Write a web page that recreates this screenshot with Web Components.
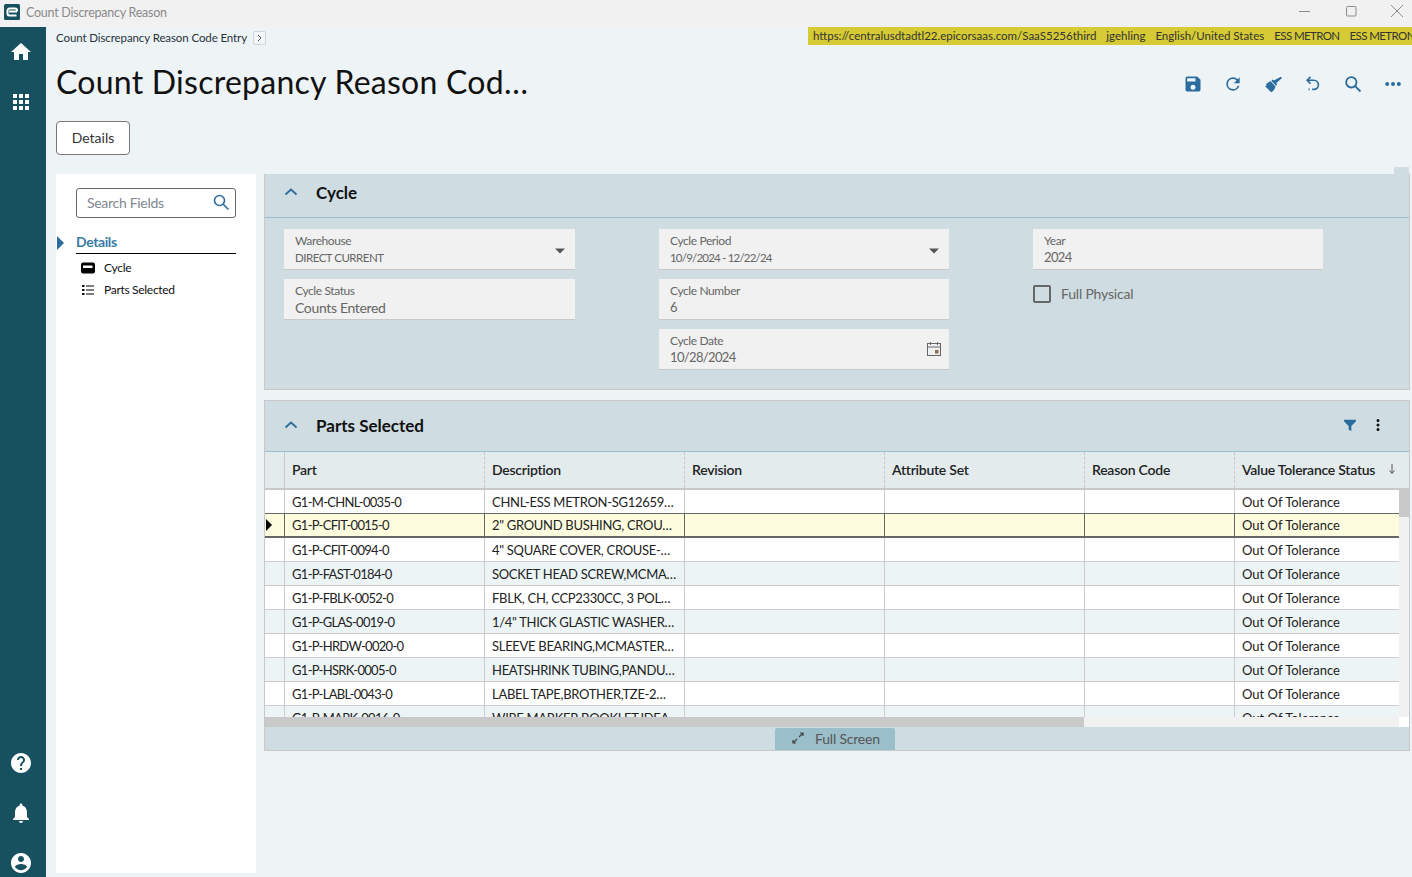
<!DOCTYPE html>
<html lang="en">
<head>
<meta charset="utf-8">
<title>Count Discrepancy Reason</title>
<style>
  html, body { margin: 0; height: 100%; overflow: hidden; }
  body {
    font-family: Lato, "Noto Sans", sans-serif;
    background: #eef3f6;
    color: #222;
    display: flex;
    flex-direction: column;
  }
  .main { display: flex; flex: 1; min-height: 0; }
  .page { flex: 1; min-width: 0; display: flex; flex-direction: column; }
</style>
</head>
<body>
<app-titlebar>Count Discrepancy Reason</app-titlebar>
<div class="main">
  <app-rail></app-rail>
  <div class="page">
    <page-header></page-header>
    <page-body>
      <side-nav slot="side"></side-nav>
      <collapse-section heading="Cycle">
        <cycle-form></cycle-form>
      </collapse-section>
      <collapse-section heading="Parts Selected" tools gap>
        <parts-grid></parts-grid>
      </collapse-section>
    </page-body>
  </div>
</div>

<script>
const icons = {
  home: 'M10 20v-6h4v6h5v-8h3L12 3 2 12h3v8z',
  apps: 'M4 8h4V4H4v4zm6 12h4v-4h-4v4zm-6 0h4v-4H4v4zm0-6h4v-4H4v4zm6 0h4v-4h-4v4zm6-10v4h4V4h-4zm-6 4h4V4h-4v4zm6 6h4v-4h-4v4zm0 6h4v-4h-4v4z',
  help: 'M12 2C6.48 2 2 6.48 2 12s4.48 10 10 10 10-4.48 10-10S17.52 2 12 2zm1 17h-2v-2h2v2zm2.07-7.75l-.9.92C13.45 12.9 13 13.5 13 15h-2v-.5c0-1.1.45-2.1 1.17-2.83l1.24-1.26c.37-.36.59-.86.59-1.41 0-1.1-.9-2-2-2s-2 .9-2 2H8c0-2.21 1.79-4 4-4s4 1.79 4 4c0 .88-.36 1.68-.93 2.25z',
  bell: 'M12 22c1.1 0 2-.9 2-2h-4c0 1.1.89 2 2 2zm6-6v-5c0-3.07-1.64-5.64-4.5-6.32V4c0-.83-.67-1.5-1.5-1.5s-1.5.67-1.5 1.5v.68C7.63 5.36 6 7.92 6 11v5l-2 2v1h16v-1l-2-2z',
  user: 'M12 2C6.48 2 2 6.48 2 12s4.48 10 10 10 10-4.48 10-10S17.52 2 12 2zm0 3c1.66 0 3 1.34 3 3s-1.34 3-3 3-3-1.34-3-3 1.34-3 3-3zm0 14.2c-2.5 0-4.71-1.28-6-3.22.03-1.99 4-3.08 6-3.08 1.99 0 5.97 1.09 6 3.08-1.29 1.94-3.5 3.22-6 3.22z',
  save: 'M17 3H5a2 2 0 0 0-2 2v14a2 2 0 0 0 2 2h14a2 2 0 0 0 2-2V7l-4-4zm-5 16a3 3 0 1 1 0-6 3 3 0 0 1 0 6zm3-10H5V5h10v4z',
  refresh: 'M17.65 6.35A7.96 7.96 0 0 0 12 4a8 8 0 1 0 7.73 10h-2.08A6 6 0 1 1 12 6c1.66 0 3.14.69 4.22 1.78L13 11h7V4l-2.35 2.35z',
  brush: 'M21.5 3.2l1.3 1.5-7 6.3 1.2 1.6-1.6 1.4-5.4-6 1.6-1.4 1.4 1.2 8.5-4.6zM8.9 8.5l6 6.6c-.4 2.6-2.3 5.4-5 6.9L2.2 14.4l2.3-.3-1-1.9 5.4-3.7z',
  more: 'M5 9.6a2.4 2.4 0 1 0 0 4.8 2.4 2.4 0 0 0 0-4.8zm14 0a2.4 2.4 0 1 0 0 4.8 2.4 2.4 0 0 0 0-4.8zm-7 0a2.4 2.4 0 1 0 0 4.8 2.4 2.4 0 0 0 0-4.8z',
  filter: 'M3 4h18v2.5l-7 7V21l-4-2v-5.5l-7-7V4z',
  vmore: 'M12 8a2 2 0 1 0 0-4 2 2 0 0 0 0 4zm0 2a2 2 0 1 0 0 4 2 2 0 0 0 0-4zm0 6a2 2 0 1 0 0 4 2 2 0 0 0 0-4z'
};

function svg(name, size, color) {
  return `<svg width="${size}" height="${size}" viewBox="0 0 24 24" fill="${color}" aria-hidden="true"><path d="${icons[name]}"/></svg>`;
}

class AppTitlebar extends HTMLElement {
  constructor() {
    super();
    this.attachShadow({ mode: 'open' }).innerHTML = `
      <style>
        :host { display: flex; align-items: center; height: 27px; background: #f1f1f1; color: #8b8b8b; font-size: 12.5px; letter-spacing: -.25px; flex: none; }
        .logo { margin: 0 6px 3px 4px; display: block; }
        .title { flex: 1; padding-bottom: 3px; }
        .ctl { display: flex; gap: 30px; padding: 0 7px 6px 0; align-items: center; }
      </style>
      <svg class="logo" width="16" height="16" viewBox="0 0 16 16">
        <rect width="16" height="16" rx="1.5" fill="#17505f"/>
        <path d="M13 7.5H5M12.5 11.5H5.5a2 2 0 0 1-2-2V6.5a2 2 0 0 1 2-2h5.5a2 2 0 0 1 2 2v1" fill="none" stroke="#fff" stroke-width="2"/>
      </svg>
      <span class="title"><slot></slot></span>
      <div class="ctl">
        <svg width="16" height="16" viewBox="0 0 16 16"><path d="M2 8.5h11" stroke="#8b8b8b"/></svg>
        <svg width="16" height="16" viewBox="0 0 16 16"><rect x="3.5" y="3.5" width="9.5" height="9.5" rx="1" fill="none" stroke="#8b8b8b"/></svg>
        <svg width="16" height="16" viewBox="0 0 16 16"><path d="M2 2l12 12M14 2L2 14" stroke="#8b8b8b"/></svg>
      </div>`;
  }
}

class AppRail extends HTMLElement {
  constructor() {
    super();
    this.attachShadow({ mode: 'open' }).innerHTML = `
      <style>
        :host { display: flex; flex-direction: column; width: 37px; flex: none; background: #17505f; padding: 13px 0 2px 9px; }
        .group { display: flex; flex-direction: column; gap: 26px; }
        .bottom { margin-top: auto; }
        svg { display: block; }
      </style>
      <div class="group">${svg('home', 24, '#fff')}${svg('apps', 24, '#fff')}</div>
      <div class="group bottom">${svg('help', 24, '#fff')}${svg('bell', 24, '#fff')}${svg('user', 24, '#fff')}</div>`;
  }
}

class PageHeader extends HTMLElement {
  constructor() {
    super();
    const actions = [
      svg('save', 20, '#2a6c9d'),
      svg('refresh', 20, '#2a6c9d'),
      svg('brush', 20, '#2a6c9d'),
      `<svg width="20" height="20" viewBox="0 0 24 24" fill="none" stroke="#2a6c9d" stroke-width="2"><path d="M9 3.5L5 7.5l4 4"/><path d="M5 7.5h8a5.5 5.5 0 0 1 0 11h-2"/><path d="M6.5 18.5h2" stroke-dasharray="1.5 1"/></svg>`,
      `<svg width="20" height="20" viewBox="0 0 24 24" fill="none" stroke="#2a6c9d" stroke-width="2.2"><circle cx="10" cy="10" r="6.2"/><path d="M14.5 14.5l6.5 6.5"/></svg>`,
      svg('more', 20, '#2a6c9d')
    ];
    this.attachShadow({ mode: 'open' }).innerHTML = `
      <style>
        :host { display: block; flex: none; padding-left: 10px; }
        .top { display: flex; justify-content: space-between; height: 23px; }
        .crumb { display: flex; align-items: center; gap: 6px; font-size: 11.5px; letter-spacing: -.1px; color: #26323a; height: 22px; }
        .crumb .txt { margin-top: -2px; }
        .next { width: 11px; height: 12px; border: 1px solid #cfd6d9; border-radius: 2px; display: grid; place-items: center; background: #f3f6f8; }
        .env { width: 599px; height: 18px; background: #d6ca35; padding-left: 5px; overflow: hidden; white-space: nowrap; font-size: 11.5px; line-height: 18px; color: #333; display: flex; gap: 10px; }
        .env .sp { letter-spacing: -.6px; }
        .head { display: flex; align-items: center; justify-content: space-between; height: 66px; }
        h1 { margin: 0 0 4px; font-size: 32px; font-weight: 400; color: #111; letter-spacing: .25px; }
        .acts { display: flex; gap: 20px; padding: 2px 9px 0 0; }
        .acts svg { display: block; }
        button { display: block; font: inherit; font-size: 14px; color: #333; width: 74px; height: 34px; background: #fff; border: 1px solid #777; border-radius: 4px; padding: 0 0 2px; margin-top: 5px; }
      </style>
      <div class="top">
        <div class="crumb"><span class="txt">Count Discrepancy Reason Code Entry</span>
          <span class="next"><svg width="7" height="8" viewBox="0 0 7 8" fill="none" stroke="#555"><path d="M2 1l3 3-3 3"/></svg></span>
        </div>
        <div class="env"><span>https://centralusdtadtl22.epicorsaas.com/SaaS5256third</span><span>jgehling</span><span>English/United States</span><span class="sp">ESS METRON</span><span class="sp">ESS METRON</span></div>
      </div>
      <div class="head">
        <h1>Count Discrepancy Reason Cod…</h1>
        <div class="acts">${actions.join('')}</div>
      </div>
      <button type="button">Details</button>`;
  }
}

class PageBody extends HTMLElement {
  constructor() {
    super();
    this.attachShadow({ mode: 'open' }).innerHTML = `
      <style>
        :host { display: flex; flex: 1; min-height: 0; gap: 8px; padding: 19px 2px 4px 10px; position: relative; }
        .side { width: 200px; flex: none; background: #fff; }
        .content { flex: 1; min-width: 0; }
        .strip { position: absolute; top: 12px; right: 3px; width: 15px; height: 8px; background: #cfdce1; }
      </style>
      <div class="strip"></div>
      <div class="side"><slot name="side"></slot></div>
      <div class="content"><slot></slot></div>`;
  }
}

class SideNav extends HTMLElement {
  constructor() {
    super();
    this.attachShadow({ mode: 'open' }).innerHTML = `
      <style>
        :host { display: block; padding: 14px 20px 0 20px; position: relative; font-size: 12px; color: #111; }
        .search { display: flex; align-items: center; justify-content: space-between; height: 28px; border: 1px solid #666; border-radius: 3px; padding: 0 5px 0 10px; font-size: 14px; color: #808890; }
        .search span { letter-spacing: -.3px; margin-top: -2px; }
        .search svg { display: block; margin-top: -2px; }
        .details { margin-top: 15px; height: 20px; border-bottom: 1px solid #000; color: #3a7aa6; font-size: 14px; font-weight: 700; line-height: 18px; letter-spacing: -.4px; }
        .mark { position: absolute; left: 1px; top: 62px; width: 0; height: 0; border-left: 7px solid #2a6c9d; border-top: 7px solid transparent; border-bottom: 7px solid transparent; }
        .item { display: flex; align-items: center; gap: 9px; height: 22px; padding-left: 5px; letter-spacing: -.3px; }
        .item svg { display: block; }
        .item span { margin-top: -2px; }
        .items { padding-top: 3px; }
      </style>
      <div class="search"><span>Search Fields</span>
        <svg width="18" height="18" viewBox="0 0 18 18" fill="none" stroke="#2a6c9d" stroke-width="1.6"><circle cx="7.5" cy="7.5" r="5"/><path d="M11 11l5.5 5.5"/></svg>
      </div>
      <span class="mark"></span>
      <div class="details">Details</div>
      <div class="items">
        <div class="item"><svg width="14" height="14" viewBox="0 0 14 14"><rect y="1.5" width="14" height="11" rx="2" fill="#000"/><rect x="2" y="4.5" width="9.5" height="2.5" fill="#fff"/></svg><span>Cycle</span></div>
        <div class="item"><svg width="14" height="14" viewBox="0 0 14 14"><path d="M1 2h2.5v2H1zM1 6h2.5v2H1zM1 10h2.5v2H1z" fill="#111"/><path d="M5 3h8M5 7h8M5 11h8" stroke="#555" stroke-width="1.3"/></svg><span>Parts Selected</span></div>
      </div>`;
  }
}

class CollapseSection extends HTMLElement {
  constructor() {
    super();
    const title = this.getAttribute('heading');
    const tools = this.hasAttribute('tools');
    this.attachShadow({ mode: 'open' }).innerHTML = `
      <style>
        :host { display: block; background: #cfdce1; border-left: 1px solid #c8c8c8; border-right: 1px solid #c8c8c8; border-bottom: 1px solid #c8c8c8; font-size: 14px; }
        :host([gap]) { margin-top: 10px; border-top: 1px solid #c8c8c8; }
        .head { display: flex; align-items: center; height: 36px; padding: 0 0 7px 19px; border-bottom: 1px solid #95c0cc; }
        :host([gap]) .head { height: 48px; padding-bottom: 2px; }
        .chev { display: block; width: 14px; height: 14px; margin-right: 18px; }
        h2 { margin: 0; font-size: 17px; font-weight: 700; color: #111; flex: 1; }
        .tools { display: flex; gap: 11px; padding-right: 22px; align-items: center; }
        .tools svg { display: block; }
      </style>
      <div class="head">
        <svg class="chev" viewBox="0 0 14 14" fill="none" stroke="#2a6c9d" stroke-width="1.8"><path d="M1.5 9.5L7 4.5l5.5 5"/></svg>
        <h2>${title}</h2>
        ${tools ? `<div class="tools">${svg('filter', 16, '#2a6c9d')}${svg('vmore', 18, '#111')}</div>` : ''}
      </div>
      <slot></slot>`;
  }
}

class FormField extends HTMLElement {
  constructor() {
    super();
    const small = this.hasAttribute('small');
    const num = this.hasAttribute('num');
    const size = small ? 11.5 : num ? 13 : 14;
    const spacing = this.getAttribute('spacing') || (num ? '-.65px' : '-.35px');
    this.attachShadow({ mode: 'open' }).innerHTML = `
      <style>
        :host { display: flex; align-items: center; box-sizing: border-box; height: 41px; background: #f1f1f1; border-bottom: 1px solid #c8c8c8; padding: 0 8px 0 11px; color: #666; }
        .txt { flex: 1; }
        .label { font-size: 12px; line-height: 15px; letter-spacing: -.4px; }
        .value { font-size: ${size}px; line-height: 15px; margin-top: 2px; letter-spacing: ${spacing}; }
        ::slotted(svg) { display: block; }
        ::slotted(.caret) { margin-top: 3px; }
        ::slotted(.cal) { margin-right: -1px; }
      </style>
      <div class="txt">
        <div class="label">${this.getAttribute('label')}</div>
        <div class="value">${this.getAttribute('value')}</div>
      </div>
      <slot></slot>`;
  }
}

class CycleForm extends HTMLElement {
  constructor() {
    super();
    const caret = `<svg class="caret" width="14" height="14" viewBox="0 0 14 14" fill="#555"><path d="M2 4.5h10L7 9.5z"/></svg>`;
    const cal = `<svg class="cal" width="16" height="16" viewBox="0 0 16 16" fill="none" stroke="#666"><rect x="1.5" y="2.5" width="13" height="12"/><path d="M1.5 6h13M4.5 1v3M11.5 1v3"/><rect x="9" y="9" width="3.5" height="3.5" fill="#8a6d4b" stroke="none"/></svg>`;
    this.attachShadow({ mode: 'open' }).innerHTML = `
      <style>
        :host { display: grid; grid-template-columns: 291px 290px 290px; column-gap: 84px; row-gap: 9px; padding: 11px 0 19px 19px; }
        .check { display: flex; align-items: center; gap: 10px; height: 30px; align-self: start; font-size: 14px; letter-spacing: -.2px; color: #666; }
        .check span.lbl { margin-top: -1px; }
        .box { box-sizing: border-box; width: 18px; height: 18px; border: 2px solid #666; border-radius: 2px; }
      </style>
      <form-field label="Warehouse" value="DIRECT CURRENT" small spacing="-.5px">${caret}</form-field>
      <form-field label="Cycle Period" value="10/9/2024 - 12/22/24" small spacing="-.8px">${caret}</form-field>
      <form-field label="Year" value="2024" num></form-field>
      <form-field label="Cycle Status" value="Counts Entered"></form-field>
      <form-field label="Cycle Number" value="6" num></form-field>
      <div class="check"><span class="box"></span><span class="lbl">Full Physical</span></div>
      <span></span>
      <form-field label="Cycle Date" value="10/28/2024" num>${cal}</form-field>`;
  }
}

class PartsGrid extends HTMLElement {
  constructor() {
    super();
    const rows = [
      ['G1-M-CHNL-0035-0', 'CHNL-ESS METRON-SG12659…'],
      ['G1-P-CFIT-0015-0', '2" GROUND BUSHING, CROU…'],
      ['G1-P-CFIT-0094-0', '4" SQUARE COVER, CROUSE-…'],
      ['G1-P-FAST-0184-0', 'SOCKET HEAD SCREW,MCMA…'],
      ['G1-P-FBLK-0052-0', 'FBLK, CH, CCP2330CC, 3 POL…'],
      ['G1-P-GLAS-0019-0', '1/4" THICK GLASTIC WASHER…'],
      ['G1-P-HRDW-0020-0', 'SLEEVE BEARING,MCMASTER…'],
      ['G1-P-HSRK-0005-0', 'HEATSHRINK TUBING,PANDU…'],
      ['G1-P-LABL-0043-0', 'LABEL TAPE,BROTHER,TZE-2…'],
      ['G1-P-MARK-0016-0', 'WIRE MARKER BOOKLET,IDEA…']
    ];
    const heads = ['Part', 'Description', 'Revision', 'Attribute Set', 'Reason Code'];
    const rowHtml = rows.map((r, i) => {
      let cls = 'row';
      if (i === 0) cls += ' before';
      if (i === 1) cls += ' sel';
      if (i > 2 && i % 2 === 1) cls += ' alt';
      return `<div class="${cls}"><div class="c ind">${i === 1 ? '<span class="tri"></span>' : ''}</div><div class="c part">${r[0]}</div><div class="c desc">${r[1].replace(/"/g, '&quot;')}</div><div class="c"></div><div class="c"></div><div class="c"></div><div class="c last">Out Of Tolerance</div></div>`;
    }).join('');
    this.attachShadow({ mode: 'open' }).innerHTML = `
      <style>
        :host { display: block; font-size: 13px; color: #222; }
        .hdr, .row { display: grid; grid-template-columns: 20px 200px 200px 200px 200px 150px 1fr; }
        .hdr { height: 38px; box-sizing: border-box; background: #e3ebed; border-bottom: 2px solid #c8c8c8; font-size: 14px; font-weight: 600; letter-spacing: -.25px; }
        .hdr div { display: flex; align-items: center; padding: 0 0 2px 7px; border-right: 1px dashed #c8c8c8; }
        .hdr div:first-child { padding: 0; border-right: 1px solid #c8c8c8; }
        .hdr div:last-child { border: 0; justify-content: space-between; padding-right: 12px; }
        .wrap { display: flex; height: 237px; }
        .left { flex: 1; min-width: 0; }
        .rows { height: 227px; overflow: hidden; background: #fff; }
        .row { height: 24px; box-sizing: border-box; border-bottom: 1px solid #ccc; }
        .row.alt { background: #edf4f6; }
        .row.before { border-bottom-color: #666; }
        .row.sel { background: #fdfcdf; border-bottom: 2px solid #666; }
        .c { display: flex; align-items: center; padding-left: 7px; border-right: 1px solid #ccc; white-space: nowrap; overflow: hidden; }
        .c.ind { padding: 0; }
        .c.part { letter-spacing: -.7px; }
        .c.desc { letter-spacing: -.3px; }
        .c.last { border: 0; }
        .row.sel .c { border-right-color: #666; }
        .row.sel .c.last { border: 0; }
        .tri { border-left: 6px solid #000; border-top: 6px solid transparent; border-bottom: 6px solid transparent; margin-left: 1px; }
        .hs { height: 10px; background: #f1f1f1; }
        .hs div { width: 819px; height: 10px; background: #c9c9c9; }
        .vs { width: 10px; background: #f1f1f1; border-bottom: 10px solid #fff; height: 227px; }
        .vs div { height: 27px; background: #c9c9c9; }
        .foot { height: 23px; padding-left: 510px; box-sizing: border-box; padding-top: 1px; }
        .tab { box-sizing: border-box; width: 120px; height: 22px; background: #9bbfca; border-radius: 2px 2px 0 0; display: flex; align-items: center; gap: 10px; padding: 0 0 2px 16px; font-size: 14px; letter-spacing: -.2px; color: #555; }
        .tab svg { display: block; }
      </style>
      <div class="hdr">
        <div></div>
        ${heads.map(h => `<div>${h}</div>`).join('')}
        <div>Value Tolerance Status
          <svg width="10" height="12" viewBox="0 0 10 12" fill="none" stroke="#555"><path d="M5 1v9M2.5 7.5L5 10.5l2.5-3"/></svg>
        </div>
      </div>
      <div class="wrap">
        <div class="left">
          <div class="rows">${rowHtml}</div>
          <div class="hs"><div></div></div>
        </div>
        <div class="vs"><div></div></div>
      </div>
      <div class="foot">
        <div class="tab">
          <svg width="14" height="14" viewBox="0 0 14 14" fill="none" stroke="#444" stroke-width="1.2"><path d="M8 6l4-4M9 2h3v3M6 8l-4 4M2 9v3h3"/></svg>
          Full Screen
        </div>
      </div>`;
  }
}

customElements.define('app-titlebar', AppTitlebar);
customElements.define('app-rail', AppRail);
customElements.define('page-header', PageHeader);
customElements.define('page-body', PageBody);
customElements.define('side-nav', SideNav);
customElements.define('collapse-section', CollapseSection);
customElements.define('form-field', FormField);
customElements.define('cycle-form', CycleForm);
customElements.define('parts-grid', PartsGrid);
</script>
</body>
</html>
